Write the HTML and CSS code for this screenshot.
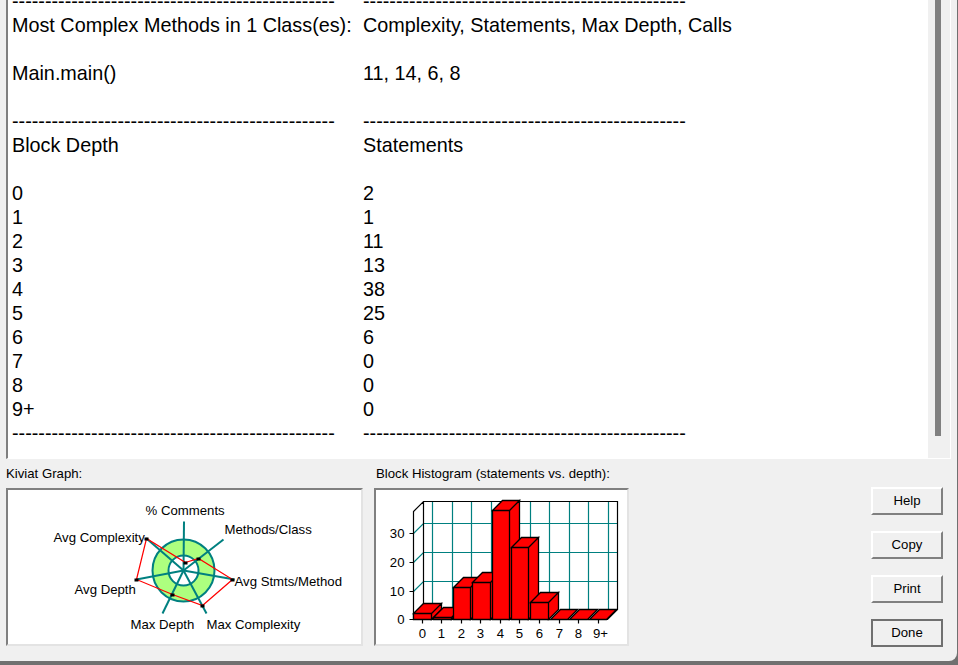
FILE: index.html
```html
<!DOCTYPE html>
<html lang="en">
<head>
  <meta charset="UTF-8">
  <meta name="viewport" content="width=device-width, initial-scale=1.0">
  <title>Metrics Details</title>
  <link rel="stylesheet" href="styles.css">
</head>
<body>

  <div class="dialog">
    <div class="report">
      <div class="report-text">
        <div>-------------------------------------------------</div><div>-------------------------------------------------</div>
        <div>Most Complex Methods in 1 Class(es):</div><div>Complexity, Statements, Max Depth, Calls</div>
        <div>&nbsp;</div><div>&nbsp;</div>
        <div>Main.main()</div><div>11, 14, 6, 8</div>
        <div>&nbsp;</div><div>&nbsp;</div>
        <div>-------------------------------------------------</div><div>-------------------------------------------------</div>
        <div>Block Depth</div><div>Statements</div>
        <div>&nbsp;</div><div>&nbsp;</div>
        <div>0</div><div>2</div>
        <div>1</div><div>1</div>
        <div>2</div><div>11</div>
        <div>3</div><div>13</div>
        <div>4</div><div>38</div>
        <div>5</div><div>25</div>
        <div>6</div><div>6</div>
        <div>7</div><div>0</div>
        <div>8</div><div>0</div>
        <div>9+</div><div>0</div>
        <div>-------------------------------------------------</div><div>-------------------------------------------------</div>
      </div>
      <div class="scrollbar"><div class="scroll-thumb"></div></div>
    </div>

    <div class="bottom">
      <div class="graph kiviat">
        <div class="graph-label">Kiviat Graph:</div>
        <div class="graph-box">
          <svg width="352" height="154" viewBox="8.5 489.5 352 154">
            <circle class="ring" cx="184" cy="570" r="23"/>
            <circle class="ring-line" cx="184" cy="570" r="31"/>
            <circle class="ring-line" cx="184" cy="570" r="15"/>
            <g class="spokes">
              <line x1="184" y1="570" x2="184.5" y2="521"/>
              <line x1="184" y1="570" x2="224" y2="539"/>
              <line x1="184" y1="570" x2="235" y2="579"/>
              <line x1="184" y1="570" x2="207" y2="613"/>
              <line x1="184" y1="570" x2="163" y2="613"/>
              <line x1="184" y1="570" x2="137" y2="579"/>
              <line x1="184" y1="570" x2="147" y2="538"/>
            </g>
            <polygon class="outline" points="186,562 199,558 233,579 203,605 173,594 137,579 147,538"/>
            <g class="marks">
              <rect x="184" y="561" width="4" height="3"/>
              <rect x="197" y="557" width="4" height="3"/>
              <rect x="231" y="578" width="4" height="3"/>
              <rect x="201" y="604" width="4" height="3"/>
              <rect x="171" y="593" width="4" height="3"/>
              <rect x="135" y="578" width="4" height="3"/>
              <rect x="145" y="537" width="4" height="3"/>
            </g>
            <g class="chart-text">
              <text x="146" y="514">% Comments</text>
              <text x="225" y="533">Methods/Class</text>
              <text x="54" y="541">Avg Complexity</text>
              <text x="235" y="585">Avg Stmts/Method</text>
              <text x="75" y="593">Avg Depth</text>
              <text x="131" y="628">Max Depth</text>
              <text x="207" y="628">Max Complexity</text>
            </g>
          </svg>
        </div>
      </div>

      <div class="graph histogram">
        <div class="graph-label">Block Histogram (statements vs. depth):</div>
        <div class="graph-box">
          <svg width="250" height="154" viewBox="375.5 489.5 250 154">
            <g class="grid">
              <path d="M413 533 L423 523 H617 M413 562 L423 552 H617 M413 591 L423 581 H617"/>
              <path d="M432 501 V609 M452 501 V609 M471 501 V609 M491 501 V609 M510 501 V609 M530 501 V609 M549 501 V609 M569 501 V609 M588 501 V609 M608 501 V609"/>
            </g>
            <path class="axis" d="M409 619 H413 V511 L423 501 H617 V609 L607 619 H413 M423 501 V609 L413 619"/>
            <path class="axis" d="M409 591 H413 M409 562 H413 M409 533 H413 M422 619 V623 M441 619 V623 M461 619 V623 M480 619 V623 M500 619 V623 M519 619 V623 M539 619 V623 M559 619 V623 M578 619 V623 M598 619 V623"/>
            <g class="bars">
              <path d="M413 619 V613 H431 V619 Z M413 613 L423 603 H441 L431 613 Z M431 619 V613 L441 603 V609 Z"/>
              <path d="M433 619 V617 H451 V619 Z M433 617 L443 607 H461 L451 617 Z M451 619 V617 L461 607 V609 Z"/>
              <path d="M453 619 V587 H470 V619 Z M453 587 L463 577 H480 L470 587 Z M470 619 V587 L480 577 V609 Z"/>
              <path d="M472 619 V582 H490 V619 Z M472 582 L482 572 H500 L490 582 Z M490 619 V582 L500 572 V609 Z"/>
              <path d="M492 619 V510 H509 V619 Z M492 510 L502 500 H519 L509 510 Z M509 619 V510 L519 500 V609 Z"/>
              <path d="M511 619 V547 H528 V619 Z M511 547 L521 537 H538 L528 547 Z M528 619 V547 L538 537 V609 Z"/>
              <path d="M530 619 V602 H548 V619 Z M530 602 L540 592 H558 L548 602 Z M548 619 V602 L558 592 V609 Z"/>
              <path d="M550 619 L560 609 H577 L567 619 Z"/>
              <path d="M569 619 L579 609 H597 L587 619 Z"/>
              <path d="M589 619 L599 609 H616 L606 619 Z"/>
            </g>
            <g class="chart-text">
              <text class="tick-y" x="404" y="537">30</text>
              <text class="tick-y" x="404" y="566">20</text>
              <text class="tick-y" x="404" y="595">10</text>
              <text class="tick-y" x="404" y="623">0</text>
              <text class="tick-x" x="422" y="637">0</text>
              <text class="tick-x" x="441" y="637">1</text>
              <text class="tick-x" x="461" y="637">2</text>
              <text class="tick-x" x="480" y="637">3</text>
              <text class="tick-x" x="500" y="637">4</text>
              <text class="tick-x" x="519" y="637">5</text>
              <text class="tick-x" x="539" y="637">6</text>
              <text class="tick-x" x="559" y="637">7</text>
              <text class="tick-x" x="578" y="637">8</text>
              <text class="tick-x" x="600" y="637">9+</text>
            </g>
          </svg>
        </div>
      </div>

      <div class="buttons">
        <button type="button">Help</button>
        <button type="button">Copy</button>
        <button type="button">Print</button>
        <button type="button" class="default">Done</button>
      </div>
    </div>
  </div>

</body>
</html>
```

FILE: styles.css
```css
html, body {
  margin: 0;
  height: 665px;
  overflow: hidden;
  background-color: #707070;
}
body {
  font-family: "Liberation Sans", Arial, sans-serif;
  color: #000;
}
.dialog {
  width: 957px;
  height: 661px;
  background-color: #f0f0f0;
  border-bottom-right-radius: 8px;
  padding-left: 6px;
  box-sizing: border-box;
}
.report {
  display: flex;
  width: 945px;
  height: 459px;
  box-sizing: border-box;
  border-left: 2px solid #808080;
  border-right: 1px solid #fff;
  border-bottom: 1px solid #fff;
}
.report-text {
  display: grid;
  grid-template-columns: 351px 1fr;
  align-content: start;
  flex: 1;
  overflow: hidden;
  padding-left: 4px;
  background-color: #fff;
  font-size: 19.8px;
  line-height: 24px;
}
.report-text > div {
  white-space: nowrap;
}
.report-text > div:nth-child(-n+2) {
  margin-top: -11px;
}
.scrollbar {
  width: 22px;
  background-color: #f0f0f0;
}
.scroll-thumb {
  width: 6px;
  height: 436px;
  margin-left: 7px;
  background-color: #808080;
}
.bottom {
  display: flex;
  padding-top: 7px;
}
.graph-label {
  font-size: 13.2px;
  line-height: 14px;
  padding-top: 1px;
  margin-bottom: 7px;
  white-space: nowrap;
}
.kiviat {
  width: 357px;
  margin-right: 11px;
}
.histogram {
  width: 255px;
  margin-right: 242px;
}
.histogram .graph-label {
  padding-left: 2px;
}
.graph-box {
  display: flex;
  height: 154px;
  background-color: #fff;
  border: 2px solid;
  border-color: #808080 #e3e3e3 #e3e3e3 #808080;
}
.ring {
  fill: none;
  stroke: #adff7f;
  stroke-width: 16;
}
.ring-line {
  fill: none;
  stroke: #008080;
  stroke-width: 2;
}
.spokes line {
  stroke: #008080;
  stroke-width: 2;
}
.outline {
  fill: none;
  stroke: #ff0000;
  stroke-width: 1.2;
}
.marks rect {
  fill: #000;
}
.chart-text text {
  font-size: 13.2px;
  fill: #000;
}
.chart-text .tick-y {
  text-anchor: end;
}
.chart-text .tick-x {
  text-anchor: middle;
}
.grid path {
  fill: none;
  stroke: #008080;
  stroke-width: 1.2;
}
.axis {
  fill: none;
  stroke: #000;
  stroke-width: 1.2;
}
.bars path {
  fill: #ff0000;
  stroke: #000;
  stroke-width: 1.3;
}
.buttons {
  display: flex;
  flex-direction: column;
  gap: 16px;
  padding-top: 21px;
}
.buttons button {
  width: 72px;
  height: 28px;
  padding: 0 0 1px;
  background-color: #f0f0f0;
  border: 2px solid;
  border-color: #fff #808080 #808080 #fff;
  font-family: "Liberation Sans", Arial, sans-serif;
  font-size: 13.2px;
  color: #000;
}
.buttons .default {
  border-color: #707070;
}
```
